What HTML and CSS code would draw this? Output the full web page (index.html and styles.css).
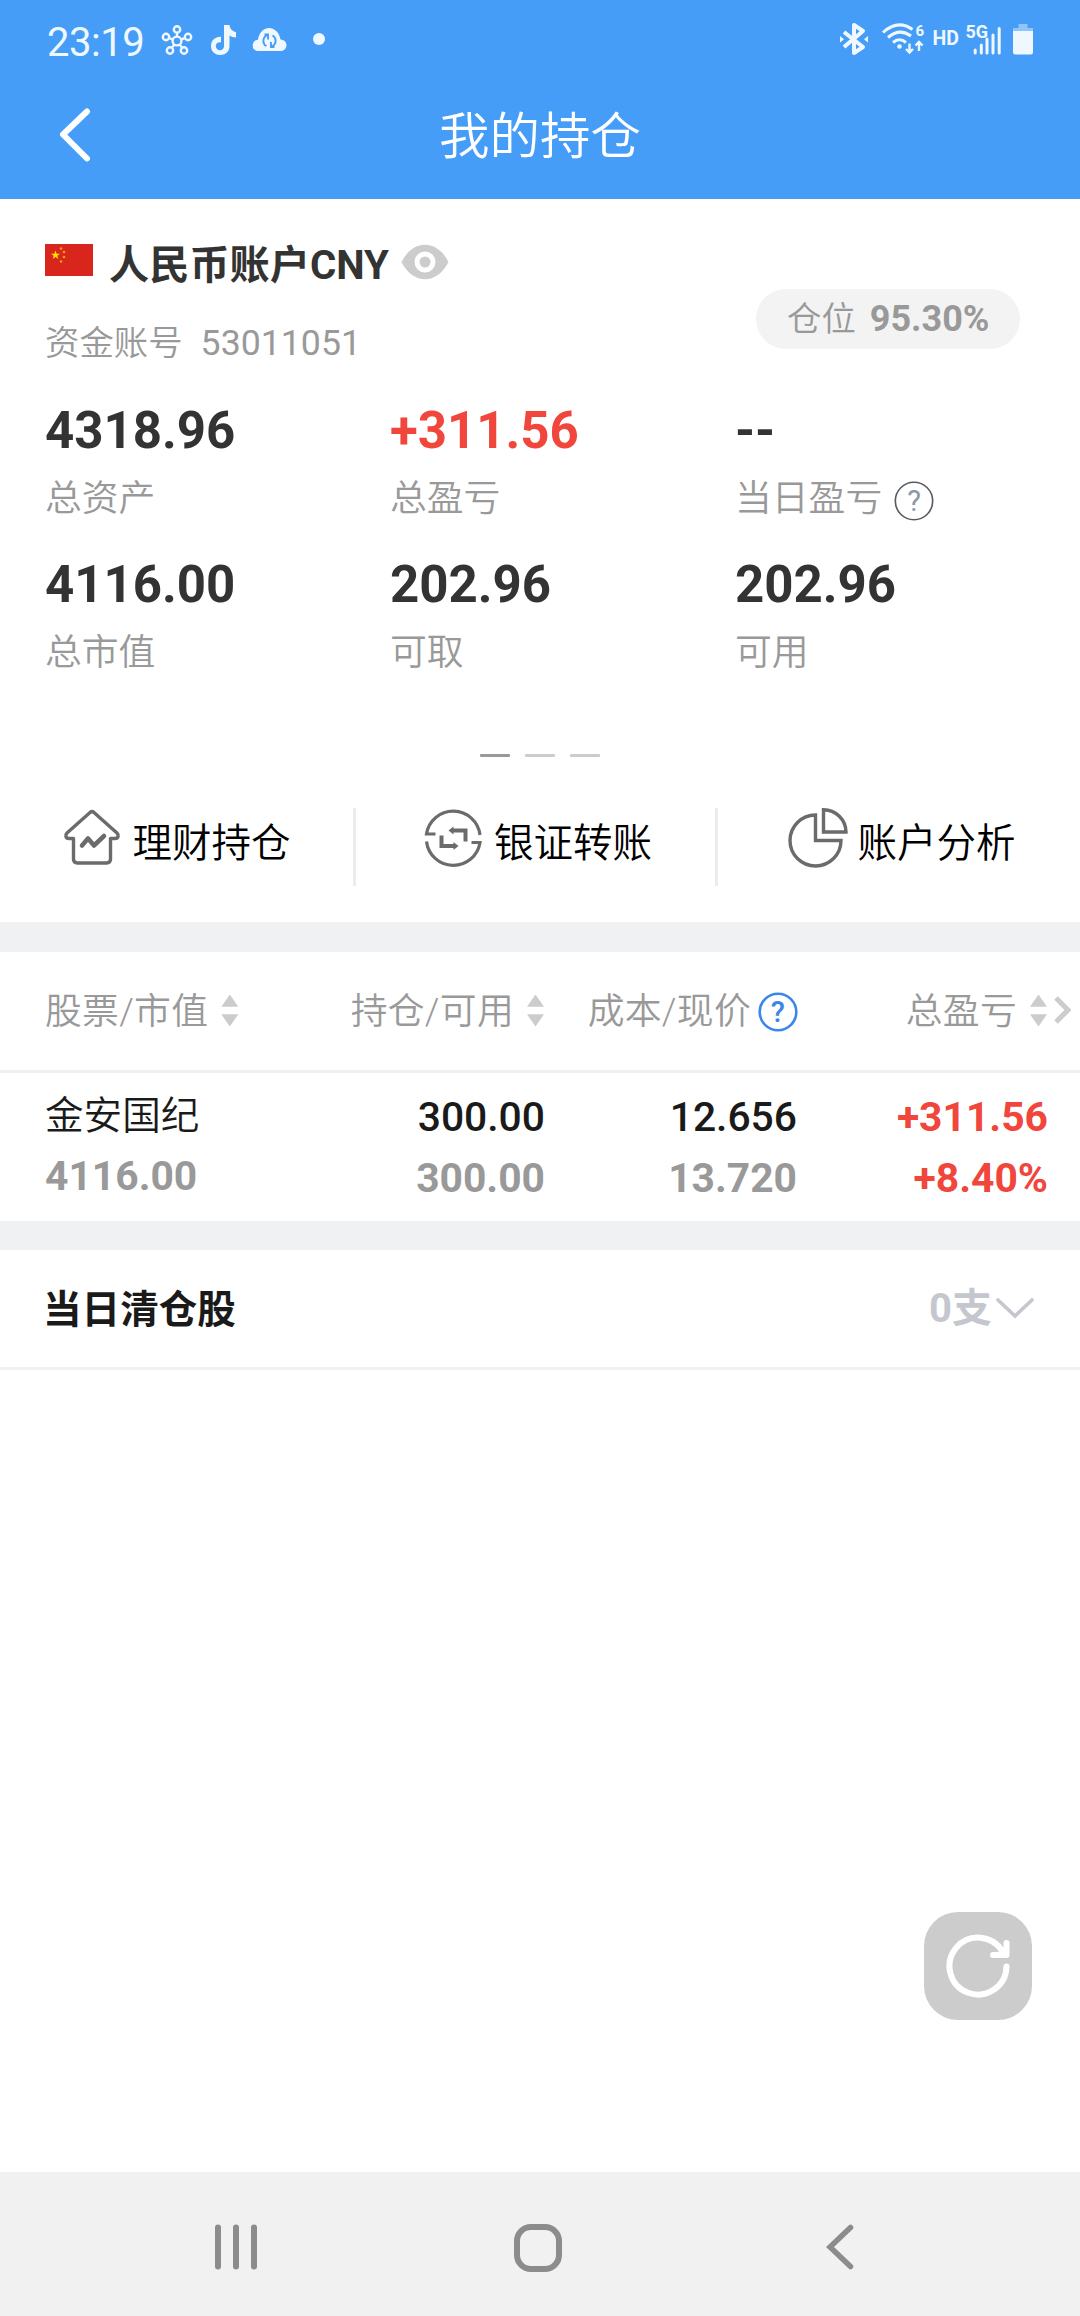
FILE: index.html
```html
<!DOCTYPE html>
<html lang="zh-CN">
<head>
  <meta charset="UTF-8" />
  <meta name="viewport" content="width=device-width, initial-scale=1.0"/>
  <title>我的持仓</title>
  <link rel="stylesheet" href="styles.css">
</head>
<body>
  <header class="header">
    <div class="status-bar">
      <span class="time">23:19</span>
      <svg class="status-left" width="170" height="40" viewBox="156 20 170 40">
        <!-- hub -->
        <g fill="none" stroke="#f0f8ff" stroke-width="2.4">
          <circle cx="177" cy="41" r="4.4"/>
          <circle cx="177" cy="29.5" r="3.2"/>
          <circle cx="166" cy="37" r="3.2"/>
          <circle cx="188" cy="37" r="3.2"/>
          <circle cx="170" cy="50.5" r="3.2"/>
          <circle cx="184" cy="50.5" r="3.2"/>
          <path d="M177 32.5v4M169 38l4 1.6M185 38l-4 1.6M172 47.6l2.4-3M182 47.6l-2.4-3"/>
        </g>
        <!-- music note -->
        <path d="M224 25h5.5c.5 4 3 6.500 6.500 7v5.500c-2.500 0-4.600-.8-6.500-2V46c0 12-18.500 12-18.500 0 0-6 4.500-9.500 10-9.200v5.500c-8-.5-5.500 8.400-1 8 2.500-.2 4-1.800 4-4.300z" fill="#f0f8ff"/>
        <!-- cloud -->
        <path d="M257 51a5.700 5.700 0 0 1 1-11.200C260 24 278 24 280.500 39.500A5.700 5.700 0 0 1 281 51z" fill="#f0f8ff"/>
        <path d="M264.500 34.500h3.500v5M267 35c-5 3-4.500 9-.5 11M274.500 47h-3.500v-5M272 46.500c5-3 4.500-9 .5-11" fill="none" stroke="#469df8" stroke-width="1.900"/>
        <circle cx="319" cy="39" r="6" fill="#f0f8ff"/>
      </svg>
      <svg class="status-right" width="204" height="40" viewBox="836 20 204 40">
        <!-- bluetooth -->
        <path d="M844 32l19 15-9 6V25l9 6-19 16" fill="none" stroke="#f0f8ff" stroke-width="4" stroke-linejoin="round"/>
        <path d="M840 36l4 3.200-4 3.200zM868 36l-4 3.200 4 3.200z" fill="#f0f8ff"/>
        <!-- wifi -->
        <g fill="none" stroke="#f0f8ff" stroke-width="3">
          <path d="M883 32.500Q898 19 912.500 29.500M888 37.500Q899.500 27.500 911 36M893 42.500Q899.500 37 906 42.500"/>
          <path d="M909.500 43.500v8.500M906 49l3.500 3.500 3.500-3.500M919 51v-8.500M915.500 45.500l3.500-3.500 3.500 3.500" stroke-width="2.400"/>
        </g>
        <circle cx="899.500" cy="46.500" r="2.300" fill="#f0f8ff"/>
        <text class="status-text" x="915.500" y="35.800" font-size="15">6</text>
        <text class="status-text" x="932.500" y="45.200" font-size="19.500">HD</text>
        <text class="status-text" x="965.500" y="38" font-size="18">5G</text>
        <!-- signal -->
        <path d="M975.200 50v3M981.300 45v8M987 39v14M993 35v18M999.200 28.500v24.500" fill="none" stroke="#f0f8ff" stroke-width="3" stroke-linecap="round"/>
        <!-- battery -->
        <path d="M1018.500 24h9v4h5.500v4h-20v-4h5.500z" fill="#90c5fc"/>
        <path d="M1013 31h20v21q0 2.500-2.500 2.500h-15q-2.500 0-2.500-2.500z" fill="#f0f8ff"/>
      </svg>
    </div>
    <div class="title-bar">
      <svg class="back" width="36" height="56" viewBox="0 0 36 56"><path d="M30 5.500L6 28.500l24 24" fill="none" stroke="#fff" stroke-width="6" stroke-linecap="round" stroke-linejoin="round"/></svg>
      <h1>我的持仓</h1>
    </div>
  </header>

  <section class="account">
    <div class="account-head">
      <div>
        <div class="account-name">
          <svg class="flag" width="48" height="32" viewBox="0 0 48 32">
            <path d="M0 0h48v32H0z" fill="#d8261c"/>
            <path d="M10.500 6.500l1.100 3.200h3.400l-2.700 2 1 3.300-2.800-2-2.800 2 1-3.300-2.700-2h3.400z" fill="#ffe600"/>
            <g fill="#e8a317"><circle cx="16" cy="4.500" r="1.300"/><circle cx="19" cy="8" r="1.300"/><circle cx="19" cy="13" r="1.300"/><circle cx="16" cy="17.500" r="1.300"/></g>
          </svg>
          <h2>人民币账户CNY</h2>
          <svg class="eye" width="48" height="36" viewBox="0 0 48 36"><path d="M.5 18C12-5 36-5 47.500 18 36 41 12 41 .5 18z" fill="#ccc"/><circle cx="24" cy="18" r="8" fill="#ccc" stroke="#fff" stroke-width="5"/></svg>
        </div>
        <div class="account-no">资金账号<span>53011051</span></div>
      </div>
      <div class="position-tag">仓位<b>95.30%</b></div>
    </div>

    <div class="assets">
      <div><b>4318.96</b><p>总资产</p></div>
      <div><b class="red">+311.56</b><p>总盈亏</p></div>
      <div><b>--</b><p>当日盈亏
        <svg class="help" width="42" height="42" viewBox="0 0 42 42"><circle cx="21" cy="21" r="18.700" fill="none" stroke="#555b62" stroke-width="1.600"/><text class="help-text" x="21" y="30.500">?</text></svg></p></div>
      <div><b>4116.00</b><p>总市值</p></div>
      <div><b>202.96</b><p>可取</p></div>
      <div><b>202.96</b><p>可用</p></div>
    </div>

    <div class="pager"><i class="on"></i><i></i><i></i></div>

    <nav class="actions">
      <a class="action">
        <svg width="60" height="60" viewBox="0 0 60 60" fill="none" stroke="#6b6b6b" stroke-width="3.400" stroke-linejoin="round" stroke-linecap="round">
          <path d="M10.500 30.500H6c-3.500 0-4-3.500-2-5.500L27 4.500q2-1.800 4 0L54 25c2 2 1.500 5.500-2 5.500h-4.500V51q0 4-4 4h-29q-4 0-4-4z"/>
          <path d="M19 37.500l6-7 6 7 10-9.500" stroke-width="4.500"/>
        </svg>
        <span>理财持仓</span>
      </a>
      <a class="action">
        <svg width="60" height="60" viewBox="0 0 60 60" fill="none" stroke="#6b6b6b" stroke-width="3.200">
          <path d="M11.500 26H2.500A27 27 0 0 1 56 27M47.500 34.500h8.500A27 27 0 0 1 2.500 33.500"/>
          <path d="M41.500 33.500V22.500H28M17.500 27.500V38h14" stroke-width="4"/>
          <path d="M24.500 22.500l5-4v8zM34.500 38l-5-4v8z" fill="#6b6b6b" stroke="none"/>
        </svg>
        <span>银证转账</span>
      </a>
      <a class="action">
        <svg width="60" height="60" viewBox="0 0 60 60" fill="none" stroke="#6b6b6b" stroke-width="3.400">
          <path d="M27.500 7A25.500 25.500 0 1 0 53 32.500H27.500z"/>
          <path d="M35.500 1.700V24H58A22.500 22.500 0 0 0 35.500 1.700z"/>
        </svg>
        <span>账户分析</span>
      </a>
    </nav>
  </section>

  <section class="holdings">
    <div class="row row-head">
      <div>股票/市值<i class="sort"></i></div>
      <div>持仓/可用<i class="sort"></i></div>
      <div>成本/现价<svg class="help-blue" width="40" height="40" viewBox="0 0 40 40"><circle cx="20" cy="20" r="18.300" fill="none" stroke="#3b86ea" stroke-width="2.600"/><text class="help-text blue" x="20" y="30">?</text></svg></div>
      <div class="last">总盈亏<i class="sort"></i><svg class="more" width="17" height="28" viewBox="0 0 17 28"><path d="M2 2l12 12L2 26" fill="none" stroke="#ccc" stroke-width="5"/></svg></div>
    </div>
    <div class="row row-body">
      <div class="stock"><p>金安国纪</p><p class="sub">4116.00</p></div>
      <div><p>300.00</p><p class="sub">300.00</p></div>
      <div><p>12.656</p><p class="sub">13.720</p></div>
      <div class="profit"><p>+311.56</p><p>+8.40%</p></div>
    </div>
  </section>

  <section class="cleared">
    <h3>当日清仓股</h3>
    <div class="cleared-count">0支<svg width="38" height="22" viewBox="0 0 38 22"><path d="M2 2l17 16L36 2" fill="none" stroke="#c5c7cf" stroke-width="3.600" stroke-linecap="round"/></svg></div>
  </section>

  <main class="blank">
    <button class="refresh">
      <svg width="68" height="68" viewBox="0 0 68 68" fill="none" stroke="#fff" stroke-width="6" stroke-linecap="round" stroke-linejoin="round"><path d="M62.500 34.500A28.500 28.500 0 1 1 58.500 19.500M62.500 11v12H49"/></svg>
    </button>
  </main>

  <footer class="nav-bar">
    <svg width="42" height="50" viewBox="0 0 42 50"><path d="M3 5.500v39M21 5.500v39M39 5.500v39" stroke="#8c8c8c" stroke-width="6" stroke-linecap="round"/></svg>
    <svg class="home" width="48" height="50" viewBox="0 0 48 50"><rect x="3" y="5" width="42" height="42" rx="14" fill="none" stroke="#8c8c8c" stroke-width="6"/></svg>
    <svg width="28" height="50" viewBox="0 0 28 50"><path d="M24.500 5.500L4 25l20.500 19.500" fill="none" stroke="#8c8c8c" stroke-width="5.500" stroke-linecap="round"/></svg>
  </footer>
</body>
</html>
```
FILE: styles.css
```css
* {
    box-sizing: border-box;
}

body {
    margin: 0;
    height: 2316px;
    display: flex;
    flex-direction: column;
    background: #fff;
    font-family: Roboto, "Noto Sans CJK SC", sans-serif;
    color: #333;
    overflow: hidden;
}

h1, h2, h3, p {
    margin: 0;
}

svg {
    display: block;
    flex: none;
}

/* Header */
.header {
    height: 199px;
    background: #469df8;
    color: #fff;
}

.status-bar {
    display: flex;
    height: 84px;
    padding: 0 40px 0 47px;
    line-height: 86px;
}

.time {
    width: 109px;
    font-size: 40px;
    letter-spacing: -0.5px;
    color: #f0f8ff;
}

.status-left, .status-right {
    margin-top: 20px;
}

.status-right {
    margin-left: auto;
}

.status-text {
    fill: #f0f8ff;
    font-weight: 700;
}

.title-bar {
    display: grid;
    grid-template-columns: 36px 1fr 36px;
    padding: 0 57px;
    height: 104px;
    align-items: center;
    text-align: center;
}

h1 {
    font-size: 50.5px;
    font-weight: 350;
    line-height: 106px;
}

.back {
    margin-bottom: 6px;
}

/* Account summary */
.account {
    height: 723px;
    padding-top: 39px;
}

.account-head {
    display: flex;
    justify-content: space-between;
    height: 130px;
    padding: 0 60px 0 45px;
}

.account-name {
    display: flex;
    height: 56px;
    line-height: 56px;
}

h2 {
    margin: 0 12px 0 16px;
    font-size: 40.2px;
    font-weight: 700;
}

.flag {
    margin-top: 6px;
}

.eye {
    margin-top: 6px;
}

.account-no {
    margin-top: 24px;
    font-size: 34.4px;
    font-weight: 350;
    line-height: 50px;
    color: #999;
}

.account-no span {
    margin-left: 18px;
    font-size: 35.7px;
    font-weight: 400;
}

.position-tag {
    width: 264px;
    height: 60px;
    margin-top: 51px;
    padding-left: 31px;
    border-radius: 30px;
    background: #f3f3f3;
    font-size: 34.4px;
    font-weight: 350;
    line-height: 60px;
    color: #999;
    white-space: nowrap;
}

.position-tag b {
    margin-left: 14px;
    font-size: 36px;
    font-weight: 700;
}

.assets {
    display: grid;
    grid-template-columns: repeat(3, 345px);
    row-gap: 30px;
    margin: 32px 0 0 45px;
}

.assets b {
    display: block;
    font-size: 51px;
    line-height: 62px;
}

.assets p {
    display: flex;
    margin-top: 12px;
    font-size: 36.8px;
    font-weight: 350;
    line-height: 50px;
    color: #999;
}

.help {
    margin: 6px 0 0 11px;
}

.help-text {
    font-size: 29px;
    font-weight: 400;
    text-anchor: middle;
    fill: #8b98a5;
}

.help-text.blue {
    font-weight: 500;
    fill: #3b86ea;
}

.pager {
    display: flex;
    justify-content: center;
    gap: 15px;
    margin-top: 76px;
}

.pager i {
    width: 30px;
    height: 3px;
    background: #ccc;
    border-radius: 1px;
}

.pager .on {
    background: #999;
}

.actions {
    display: grid;
    grid-template-columns: 356px 362px 362px;
    margin-top: 51px;
    color: #000;
}

.action {
    display: flex;
    justify-content: center;
    gap: 10px;
    height: 78px;
    font-size: 39.5px;
    font-weight: 350;
    line-height: 71px;
}

.action + .action {
    padding-left: 5px;
}

.action:not(:last-child) {
    border-right: 3px solid #ececec;
}

/* Holdings table */
.holdings {
    border-top: 30px solid #f0f1f3;
    height: 299px;
}

.row {
    display: grid;
    grid-template-columns: 270px 230px 252px 251px;
    padding-left: 45px;
}

.row > div {
    text-align: right;
}

.row > .stock {
    margin-top: -1px;
    text-align: left;
    line-height: 60px;
}

.row-head {
    height: 121px;
    padding-top: 1px;
    border-bottom: 3px solid #f0f0f0;
    font-size: 36.8px;
    font-weight: 350;
    letter-spacing: 0.3px;
    line-height: 118px;
    color: #999;
}

.row-head > div {
    display: flex;
    justify-content: flex-end;
    align-items: center;
    white-space: nowrap;
}

.row-head > div:first-child {
    justify-content: flex-start;
}

.row-head .last {
    margin-right: -23px;
}

.sort {
    width: 17px;
    height: 32px;
    margin: 0 1px 3px 13px;
    background: #ccc;
    clip-path: polygon(50% 0, 100% 38%, 0 38%, 0 62%, 100% 62%, 50% 100%, 0 62%, 0 38%);
}

.help-blue {
    margin: 0 -1px 1px 7px;
}

.more {
    margin: 0 0 5px 6px;
}

.row-body {
    padding-top: 14px;
    font-size: 40.8px;
    font-weight: 500;
    line-height: 61px;
    color: #1a1a1a;
}

.sub {
    font-weight: 700;
    color: #999;
}

.stock p:first-child {
    font-size: 38.6px;
    font-weight: 350;
}

.profit {
    font-weight: 700;
}

.red, .profit {
    color: #f0463c;
}

/* Cleared stocks */
.cleared {
    display: flex;
    justify-content: space-between;
    height: 149px;
    padding: 0 46px 0 43px;
    border-top: 29px solid #f0f1f3;
    border-bottom: 3px solid #f0f1f1;
    line-height: 119px;
}

h3 {
    font-size: 38.6px;
    font-weight: 700;
    color: #1a1a1a;
}

.cleared-count {
    display: flex;
    align-items: center;
    gap: 4px;
    font-size: 40px;
    font-weight: 700;
    color: #c5c7cf;
}

/* Page body */
.blank {
    display: flex;
    flex: 1;
    justify-content: flex-end;
    align-items: flex-end;
    padding: 0 48px 152px;
}

.refresh {
    display: flex;
    justify-content: center;
    align-items: center;
    width: 108px;
    height: 108px;
    padding: 0;
    border: 0;
    border-radius: 34px;
    background: #ccc;
}

.nav-bar {
    display: flex;
    justify-content: space-between;
    height: 144px;
    padding: 50px 226px 0 215px;
    background: #f1f1f1;
}

.nav-bar .home {
    margin-right: 7px;
}
```
